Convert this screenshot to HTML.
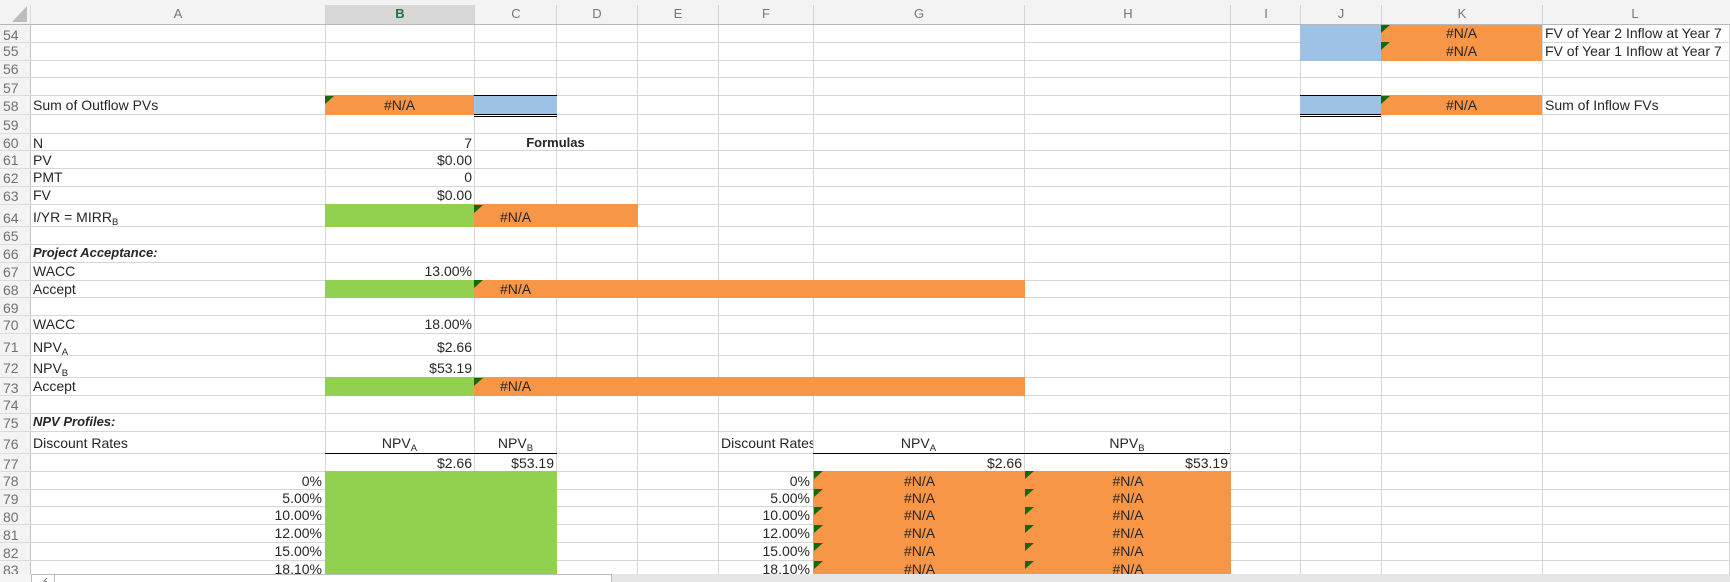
<!DOCTYPE html>
<html><head><meta charset="utf-8"><title>Sheet</title>
<style>
html,body{margin:0;padding:0;background:#fff}
#p{position:relative;width:1730px;height:582px;overflow:hidden;background:#fff;font-family:"Liberation Sans",Arial,sans-serif}
#g{position:absolute;left:0;top:0;width:1730px;height:574px;overflow:hidden}
#g div,#g span.x{position:absolute}
.h{left:30px;width:1700px;height:1px;background:#d6d6d6}
.v{top:24px;width:1px;height:550px;background:#d6d6d6}
.f{position:absolute}
.o{background:#f79646}.b{background:#9dc2e6}.n{background:#92d14f}
.t{position:absolute;font-size:14px;line-height:16px;height:16px;color:#262626;white-space:nowrap}
.r{text-align:right}.c{text-align:center}
.k{position:absolute;width:0;height:0;border-top:8px solid #13690f;border-right:9px solid transparent}
.rh{position:absolute;left:3px;font-size:14px;line-height:16px;color:#707070}
.ch{position:absolute;top:6px;width:60px;margin-left:-30px;text-align:center;font-size:13px;line-height:16px;color:#777}
.rl{position:absolute;left:0;width:30px;height:1px;background:#dcdcdc}
.cd{position:absolute;top:5px;width:1px;height:19px;background:#d2d2d2}
sub{font-size:9.5px;line-height:0;vertical-align:-3px}
.blk{position:absolute;background:#000}
</style></head><body><div id="p">
<div id="g">
<!-- row header bg -->
<div style="left:0;top:0;width:30px;height:574px;background:#f3f3f3"></div>
<div style="left:30px;top:24px;width:1px;height:550px;background:#c4c4c4"></div>
<!-- horizontal lines -->
<div class="h" style="top:42px"></div><div class="h" style="top:60px"></div><div class="h" style="top:77px"></div><div class="h" style="top:95px"></div><div class="h" style="top:114px"></div><div class="h" style="top:133px"></div><div class="h" style="top:150px"></div><div class="h" style="top:168px"></div><div class="h" style="top:186px"></div><div class="h" style="top:204px"></div><div class="h" style="top:226px"></div><div class="h" style="top:244px"></div><div class="h" style="top:262px"></div><div class="h" style="top:280px"></div><div class="h" style="top:297px"></div><div class="h" style="top:315px"></div><div class="h" style="top:333px"></div><div class="h" style="top:355px"></div><div class="h" style="top:377px"></div><div class="h" style="top:395px"></div><div class="h" style="top:413px"></div><div class="h" style="top:431px"></div><div class="h" style="top:453px"></div><div class="h" style="top:471px"></div><div class="h" style="top:489px"></div><div class="h" style="top:506px"></div><div class="h" style="top:524px"></div><div class="h" style="top:542px"></div><div class="h" style="top:560px"></div>
<!-- vertical lines -->
<div class="v" style="left:325px"></div><div class="v" style="left:474px"></div><div class="v" style="left:556px"></div><div class="v" style="left:637px"></div><div class="v" style="left:718px"></div><div class="v" style="left:813px"></div><div class="v" style="left:1024px"></div><div class="v" style="left:1230px"></div><div class="v" style="left:1300px"></div><div class="v" style="left:1381px"></div><div class="v" style="left:1542px"></div><div class="v" style="left:1729px"></div>
<!-- row header separators -->
<div class="rl" style="top:42px"></div><div class="rl" style="top:60px"></div><div class="rl" style="top:77px"></div><div class="rl" style="top:95px"></div><div class="rl" style="top:114px"></div><div class="rl" style="top:133px"></div><div class="rl" style="top:150px"></div><div class="rl" style="top:168px"></div><div class="rl" style="top:186px"></div><div class="rl" style="top:204px"></div><div class="rl" style="top:226px"></div><div class="rl" style="top:244px"></div><div class="rl" style="top:262px"></div><div class="rl" style="top:280px"></div><div class="rl" style="top:297px"></div><div class="rl" style="top:315px"></div><div class="rl" style="top:333px"></div><div class="rl" style="top:355px"></div><div class="rl" style="top:377px"></div><div class="rl" style="top:395px"></div><div class="rl" style="top:413px"></div><div class="rl" style="top:431px"></div><div class="rl" style="top:453px"></div><div class="rl" style="top:471px"></div><div class="rl" style="top:489px"></div><div class="rl" style="top:506px"></div><div class="rl" style="top:524px"></div><div class="rl" style="top:542px"></div><div class="rl" style="top:560px"></div>
<!-- fills -->
<div class="b" style="left:1300px;top:25px;width:81px;height:36px"></div>
<div class="o" style="left:1381px;top:25px;width:161px;height:36px"></div>
<div class="o" style="left:325px;top:95px;width:149px;height:20px"></div>
<div class="b" style="left:474px;top:96px;width:83px;height:18px"></div>
<div class="b" style="left:1300px;top:96px;width:81px;height:18px"></div>
<div class="o" style="left:1381px;top:95px;width:161px;height:20px"></div>
<div class="n" style="left:325px;top:204px;width:149px;height:23px"></div>
<div class="o" style="left:474px;top:204px;width:164px;height:23px"></div>
<div class="n" style="left:325px;top:280px;width:149px;height:18px"></div>
<div class="o" style="left:474px;top:280px;width:551px;height:18px"></div>
<div class="n" style="left:325px;top:377px;width:149px;height:19px"></div>
<div class="o" style="left:474px;top:377px;width:551px;height:19px"></div>
<div class="n" style="left:325px;top:471px;width:232px;height:103px"></div>
<div class="o" style="left:813px;top:471px;width:418px;height:103px"></div>
<!-- black borders -->
<div class="blk" style="left:474px;top:95px;width:83px;height:1px"></div>
<div class="blk" style="left:474px;top:114px;width:83px;height:1px"></div>
<div class="blk" style="left:474px;top:116px;width:83px;height:1px"></div>
<div class="blk" style="left:1300px;top:95px;width:81px;height:1px"></div>
<div class="blk" style="left:1300px;top:114px;width:81px;height:1px"></div>
<div class="blk" style="left:1300px;top:116px;width:81px;height:1px"></div>
<div class="blk" style="left:325px;top:453px;width:232px;height:1px"></div>
<div class="blk" style="left:813px;top:453px;width:417px;height:1px"></div>
<!-- triangles -->
<div class="k" style="left:325px;top:96px"></div>
<div class="k" style="left:1381px;top:25px"></div><div class="k" style="left:1381px;top:42px"></div><div class="k" style="left:1381px;top:96px"></div>
<div class="k" style="left:474px;top:205px"></div><div class="k" style="left:474px;top:280px"></div><div class="k" style="left:474px;top:378px"></div>
<div class="k" style="left:814px;top:471px"></div><div class="k" style="left:814px;top:489px"></div><div class="k" style="left:814px;top:507px"></div><div class="k" style="left:814px;top:525px"></div><div class="k" style="left:814px;top:543px"></div><div class="k" style="left:814px;top:561px"></div>
<div class="k" style="left:1025px;top:471px"></div><div class="k" style="left:1025px;top:489px"></div><div class="k" style="left:1025px;top:507px"></div><div class="k" style="left:1025px;top:525px"></div><div class="k" style="left:1025px;top:543px"></div><div class="k" style="left:1025px;top:561px"></div>
<!-- row numbers -->
<span class="rh" style="top:27px">54</span><span class="rh" style="top:43px">55</span><span class="rh" style="top:61px">56</span><span class="rh" style="top:80px">57</span><span class="rh" style="top:98px">58</span><span class="rh" style="top:117px">59</span><span class="rh" style="top:135px">60</span><span class="rh" style="top:152px">61</span><span class="rh" style="top:170px">62</span><span class="rh" style="top:188px">63</span><span class="rh" style="top:210px">64</span><span class="rh" style="top:228px">65</span><span class="rh" style="top:246px">66</span><span class="rh" style="top:264px">67</span><span class="rh" style="top:282px">68</span><span class="rh" style="top:300px">69</span><span class="rh" style="top:317px">70</span><span class="rh" style="top:339px">71</span><span class="rh" style="top:360px">72</span><span class="rh" style="top:380px">73</span><span class="rh" style="top:397px">74</span><span class="rh" style="top:415px">75</span><span class="rh" style="top:436px">76</span><span class="rh" style="top:456px">77</span><span class="rh" style="top:473px">78</span><span class="rh" style="top:491px">79</span><span class="rh" style="top:509px">80</span><span class="rh" style="top:527px">81</span><span class="rh" style="top:545px">82</span><span class="rh" style="top:562px">83</span>
<!-- col A labels -->
<span class="t" style="left:33px;top:97px">Sum of Outflow PVs</span>
<span class="t" style="left:33px;top:135px">N</span>
<span class="t" style="left:33px;top:152px">PV</span>
<span class="t" style="left:33px;top:169px">PMT</span>
<span class="t" style="left:33px;top:187px">FV</span>
<span class="t" style="left:33px;top:209px">I/YR = MIRR<sub>B</sub></span>
<span class="t" style="left:33px;top:245px;font-weight:bold;font-style:italic;font-size:13px">Project Acceptance:</span>
<span class="t" style="left:33px;top:263px">WACC</span>
<span class="t" style="left:33px;top:281px">Accept</span>
<span class="t" style="left:33px;top:316px">WACC</span>
<span class="t" style="left:33px;top:339px">NPV<sub>A</sub></span>
<span class="t" style="left:33px;top:360px">NPV<sub>B</sub></span>
<span class="t" style="left:33px;top:378px">Accept</span>
<span class="t" style="left:33px;top:414px;font-weight:bold;font-style:italic;font-size:13px">NPV Profiles:</span>
<span class="t" style="left:33px;top:435px">Discount Rates</span>
<!-- col B values -->
<span class="t c" style="left:325px;width:149px;top:97px">#N/A</span>
<span class="t r" style="left:325px;width:147px;top:135px">7</span>
<span class="t r" style="left:325px;width:147px;top:152px">$0.00</span>
<span class="t r" style="left:325px;width:147px;top:169px">0</span>
<span class="t r" style="left:325px;width:147px;top:187px">$0.00</span>
<span class="t r" style="left:325px;width:147px;top:263px">13.00%</span>
<span class="t r" style="left:325px;width:147px;top:316px">18.00%</span>
<span class="t r" style="left:325px;width:147px;top:339px">$2.66</span>
<span class="t r" style="left:325px;width:147px;top:360px">$53.19</span>
<span class="t c" style="left:325px;width:149px;top:435px">NPV<sub>A</sub></span>
<span class="t r" style="left:325px;width:147px;top:455px">$2.66</span>
<!-- col C -->
<span class="t c" style="left:474px;width:163px;top:135px;font-weight:bold;font-size:13px">Formulas</span>
<span class="t c" style="left:474px;width:83px;top:209px">#N/A</span>
<span class="t c" style="left:474px;width:83px;top:281px">#N/A</span>
<span class="t c" style="left:474px;width:83px;top:378px">#N/A</span>
<span class="t c" style="left:474px;width:83px;top:435px">NPV<sub>B</sub></span>
<span class="t r" style="left:474px;width:80px;top:455px">$53.19</span>
<!-- A percents -->
<span class="t r" style="left:200px;width:122px;top:473px">0%</span>
<span class="t r" style="left:200px;width:122px;top:490px">5.00%</span>
<span class="t r" style="left:200px;width:122px;top:507px">10.00%</span>
<span class="t r" style="left:200px;width:122px;top:525px">12.00%</span>
<span class="t r" style="left:200px;width:122px;top:543px">15.00%</span>
<span class="t r" style="left:200px;width:122px;top:561px">18.10%</span>
<!-- F -->
<span class="t" style="left:721px;width:92px;overflow:hidden;top:435px">Discount Rates</span>
<span class="t r" style="left:719px;width:91px;top:473px">0%</span>
<span class="t r" style="left:719px;width:91px;top:490px">5.00%</span>
<span class="t r" style="left:719px;width:91px;top:507px">10.00%</span>
<span class="t r" style="left:719px;width:91px;top:525px">12.00%</span>
<span class="t r" style="left:719px;width:91px;top:543px">15.00%</span>
<span class="t r" style="left:719px;width:91px;top:561px">18.10%</span>
<!-- G -->
<span class="t c" style="left:813px;width:211px;top:435px">NPV<sub>A</sub></span>
<span class="t r" style="left:813px;width:209px;top:455px">$2.66</span>
<span class="t c" style="left:814px;width:211px;top:473px">#N/A</span>
<span class="t c" style="left:814px;width:211px;top:490px">#N/A</span>
<span class="t c" style="left:814px;width:211px;top:507px">#N/A</span>
<span class="t c" style="left:814px;width:211px;top:525px">#N/A</span>
<span class="t c" style="left:814px;width:211px;top:543px">#N/A</span>
<span class="t c" style="left:814px;width:211px;top:561px">#N/A</span>
<!-- H -->
<span class="t c" style="left:1024px;width:206px;top:435px">NPV<sub>B</sub></span>
<span class="t r" style="left:1024px;width:204px;top:455px">$53.19</span>
<span class="t c" style="left:1025px;width:206px;top:473px">#N/A</span>
<span class="t c" style="left:1025px;width:206px;top:490px">#N/A</span>
<span class="t c" style="left:1025px;width:206px;top:507px">#N/A</span>
<span class="t c" style="left:1025px;width:206px;top:525px">#N/A</span>
<span class="t c" style="left:1025px;width:206px;top:543px">#N/A</span>
<span class="t c" style="left:1025px;width:206px;top:561px">#N/A</span>
<!-- K, L -->
<span class="t c" style="left:1381px;width:161px;top:25px">#N/A</span>
<span class="t c" style="left:1381px;width:161px;top:43px">#N/A</span>
<span class="t c" style="left:1381px;width:161px;top:97px">#N/A</span>
<span class="t" style="left:1545px;top:25px">FV of Year 2 Inflow at Year 7</span>
<span class="t" style="left:1545px;top:43px">FV of Year 1 Inflow at Year 7</span>
<span class="t" style="left:1545px;top:97px">Sum of Inflow FVs</span>
</div>
<!-- column header -->
<div class="f" style="left:0;top:0;width:1730px;height:24px;background:#f3f3f3"></div>
<div class="f" style="left:325px;top:5px;width:149px;height:19px;background:#d9d8d6"></div>
<div class="f" style="left:0;top:24px;width:1730px;height:1px;background:#b8b8b8"></div>
<div class="f" style="left:30px;top:5px;width:1px;height:19px;background:#dcdcdc"></div>
<svg class="f" style="left:0;top:0" width="30" height="24"><polygon points="12,22 27,6 27,22" fill="#bdbdbd"/></svg>
<div class="cd" style="left:325px"></div><div class="cd" style="left:474px"></div><div class="cd" style="left:556px"></div><div class="cd" style="left:637px"></div><div class="cd" style="left:718px"></div><div class="cd" style="left:813px"></div><div class="cd" style="left:1024px"></div><div class="cd" style="left:1230px"></div><div class="cd" style="left:1300px"></div><div class="cd" style="left:1381px"></div><div class="cd" style="left:1542px"></div>
<span class="ch" style="left:178px">A</span>
<span class="ch" style="left:400px;color:#217346;font-weight:bold">B</span>
<span class="ch" style="left:516px">C</span>
<span class="ch" style="left:597px">D</span>
<span class="ch" style="left:678px">E</span>
<span class="ch" style="left:766px">F</span>
<span class="ch" style="left:919px">G</span>
<span class="ch" style="left:1128px">H</span>
<span class="ch" style="left:1266px">I</span>
<span class="ch" style="left:1341px">J</span>
<span class="ch" style="left:1462px">K</span>
<span class="ch" style="left:1635px">L</span>
<!-- bottom bar -->
<div class="f" style="left:0;top:574px;width:1730px;height:8px;background:#e6e6e6"></div>
<div class="f" style="left:0;top:574px;width:31px;height:8px;background:#f5f5f5"></div>
<div class="f" style="left:31px;top:574px;width:581px;height:8px;background:#fff"></div>
<div class="f" style="left:31px;top:574px;width:581px;height:1px;background:#bcbcbc"></div>
<div class="f" style="left:31px;top:574px;width:1px;height:8px;background:#bcbcbc"></div>
<div class="f" style="left:54px;top:574px;width:1px;height:8px;background:#bcbcbc"></div>
<div class="f" style="left:611px;top:574px;width:1px;height:8px;background:#bcbcbc"></div>
<svg class="f" style="left:42px;top:578px" width="8" height="4"><path d="M5 0 L2 3 L5 4" fill="none" stroke="#777" stroke-width="1"/></svg>
</div></body></html>
